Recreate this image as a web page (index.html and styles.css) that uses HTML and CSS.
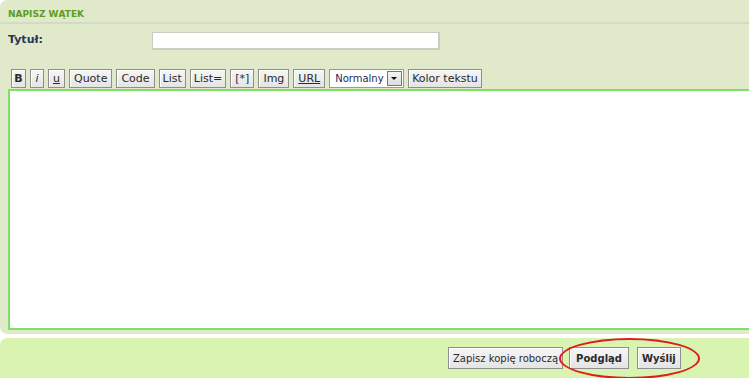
FILE: index.html
```html
<!DOCTYPE html>
<html lang="pl">
<head>
    <meta charset="UTF-8">
    <title>Napisz wątek</title>
    <link rel="stylesheet" href="styles.css">
</head>
<body>
    <div class="strona">
        <form class="panel">
            <h3 class="naglowek">NAPISZ WĄTEK</h3>
            <div class="wiersz">
                <label for="tytul">Tytuł:</label>
                <input type="text" id="tytul" class="pole">
            </div>
            <div class="narzedzia">
                <button type="button" class="btn b">B</button>
                <button type="button" class="btn i">i</button>
                <button type="button" class="btn u">u</button>
                <button type="button" class="btn">Quote</button>
                <button type="button" class="btn">Code</button>
                <button type="button" class="btn waski">List</button>
                <button type="button" class="btn waski">List=</button>
                <button type="button" class="btn">[*]</button>
                <button type="button" class="btn">Img</button>
                <button type="button" class="btn u">URL</button>
                <div class="wybor">
                    <span class="wybor-tekst">Normalny</span>
                    <span class="strzalka"></span>
                </div>
                <button type="button" class="btn waski">Kolor tekstu</button>
            </div>
            <textarea class="tresc"></textarea>
        </form>
        <div class="stopka">
            <button type="button" class="btn duzy">Zapisz kopię roboczą</button>
            <button type="button" class="btn duzy gruby">Podgląd</button>
            <button type="button" class="btn duzy gruby wyslij">Wyślij</button>
            <div class="obwodka"></div>
        </div>
    </div>
</body>
</html>
```

FILE: styles.css
```css
body {
    margin: 0;
    background: #fff;
    overflow: hidden;
    font-family: "DejaVu Sans", Verdana, sans-serif;
    font-size: 11px;
}
.strona {
    width: 780px;
}
.panel {
    margin: 0;
    background: #e0eacb;
    border-radius: 7px 0 0 7px;
    padding: 0 0 5px 0;
    height: 329px;
}
.naglowek {
    margin: 0;
    padding: 9px 8px 3px;
    font-size: 9px;
    font-weight: bold;
    color: #5c9d22;
    border-bottom: 2px solid #d3dcc2;
}
.wiersz {
    display: flex;
    align-items: center;
    padding: 8px 0 0 8px;
}
.wiersz label {
    width: 144px;
    font-weight: bold;
    color: #2b3559;
    font-size: 11px;
    margin-top: -4px;
}
.pole {
    width: 283px;
    height: 13px;
    border: 2px solid #c9cfc0;
    border-width: 1px 2px 2px 1px;
    padding: 1px;
    background: #fff;
}
.narzedzia {
    display: flex;
    gap: 4px;
    padding: 19px 0 0 11px;
    height: 19px;
}
.btn {
    font-family: "DejaVu Sans", Verdana, sans-serif;
    font-size: 11px;
    color: #2a2a2a;
    height: 19px;
    padding: 0 4px;
    background: linear-gradient(#f6f6f6, #e4e4e4);
    border: 1px solid #8e8e8e;
    box-shadow: inset 1px 1px 0 #fff;
}
.waski {
    padding: 0 3px;
}
.b {
    font-weight: bold;
    width: 15px;
    padding: 0;
}
.i {
    font-style: italic;
    width: 14px;
    padding: 0;
}
.u {
    text-decoration: underline;
}
.wybor {
    display: flex;
    align-items: center;
    width: 68px;
    height: 17px;
    border: 1px solid #999;
    background: #fff;
    color: #1f2a55;
    padding-left: 5px;
    box-sizing: content-box;
    justify-content: space-between;
    font-size: 10px;
}
.strzalka {
    width: 13px;
    height: 13px;
    margin-right: 1px;
    border: 1px solid #777;
    background: linear-gradient(#f4f4f4, #dcdcdc);
    position: relative;
}
.strzalka::after {
    content: "";
    position: absolute;
    left: 3px;
    top: 5px;
    border-left: 3px solid transparent;
    border-right: 3px solid transparent;
    border-top: 3px solid #111;
}
.tresc {
    display: block;
    margin: 1px 0 0 8px;
    width: 760px;
    height: 233px;
    border: 2px solid #7fe065;
    border-right: none;
    background: #fff;
    resize: none;
}
.stopka {
    position: relative;
    margin-top: 4px;
    height: 40px;
    background: #d9f3b1;
    border-radius: 7px 0 0 0;
    display: flex;
    align-items: flex-start;
    padding: 9px 0 0 448px;
    gap: 6px;
    box-sizing: border-box;
}
.duzy {
    height: 22px;
    padding: 0 4px;
    font-size: 10px;
}
.gruby {
    font-weight: bold;
    padding: 0 6px;
}
.wyslij {
    margin-left: 2px;
    padding: 0 4px;
}
.obwodka {
    position: absolute;
    left: 559px;
    top: 0;
    width: 137px;
    height: 37px;
    border: 2px solid #e01b1b;
    border-radius: 50%;
}
```
